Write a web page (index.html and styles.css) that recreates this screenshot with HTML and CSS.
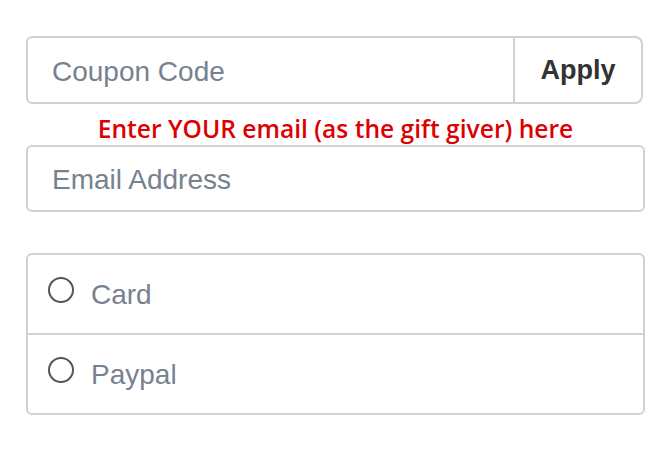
FILE: index.html
```html
<!DOCTYPE html>
<html lang="en">
<head>
    <meta charset="UTF-8">
    <meta name="viewport" content="width=device-width, initial-scale=1.0">
    <title>Checkout</title>
    <link rel="stylesheet" href="styles.css">
</head>
<body>
    <form class="checkout">
        <div class="coupon-group">
            <input type="text" class="field coupon-input" placeholder="Coupon Code">
            <button type="button" class="apply-btn">Apply</button>
        </div>

        <p class="email-note">Enter YOUR email (as the gift giver) here</p>
        <input type="email" class="field email-input" placeholder="Email Address">

        <div class="pay-options">
            <label class="pay-option">
                <input type="radio" name="pay" value="card">
                <span>Card</span>
            </label>
            <label class="pay-option">
                <input type="radio" name="pay" value="paypal">
                <span>Paypal</span>
            </label>
        </div>
    </form>
</body>
</html>
```

FILE: styles.css
```css
body {
    margin: 0;
    background: #fff;
    font-family: 'Liberation Sans', Arial, sans-serif;
}
.checkout {
    width: 619px;
    padding: 36px 0 0 26px;
}
.field {
    box-sizing: border-box;
    border: 2px solid #ccd2d6;
    background: #fff;
    font-family: 'Liberation Sans', Arial, sans-serif;
    font-size: 28px;
    color: #333;
    padding: 3px 24px 0;
    outline: none;
}
.field::placeholder {
    color: #76828f;
}
.coupon-group {
    display: flex;
    width: 617px;
    height: 68px;
}
.coupon-input {
    flex: 1;
    height: 100%;
    border-radius: 6px 0 0 6px;
}
.apply-btn {
    width: 130px;
    height: 100%;
    margin-left: -2px;
    padding-top: 2px;
    border: 2px solid #ccd2d6;
    border-radius: 0 8px 8px 0;
    background: #fff;
    color: #333;
    font-family: 'Liberation Sans', Arial, sans-serif;
    font-size: 27px;
    font-weight: bold;
}
.email-note {
    margin: 13px 0 4px;
    text-align: center;
    color: #dd0000;
    font-family: 'Open Sans', sans-serif;
    font-size: 24.6px;
    font-weight: 600;
    line-height: 24px;
}
.email-input {
    display: block;
    width: 100%;
    height: 67px;
    border-radius: 6px;
}
.pay-options {
    margin-top: 41px;
    border: 2px solid #ccd2d6;
    border-radius: 6px;
}
.pay-option {
    display: flex;
    align-items: center;
    height: 78px;
    padding-left: 20px;
    color: #76828f;
    font-size: 28px;
}
.pay-option + .pay-option {
    height: 78px;
    border-top: 2px solid #ccd2d6;
}
.pay-option input {
    appearance: none;
    width: 26px;
    height: 26px;
    margin: -8px 17px 0 0;
    border: 2px solid #555;
    border-radius: 50%;
}
.pay-option span {
    padding-top: 2px;
}
```
